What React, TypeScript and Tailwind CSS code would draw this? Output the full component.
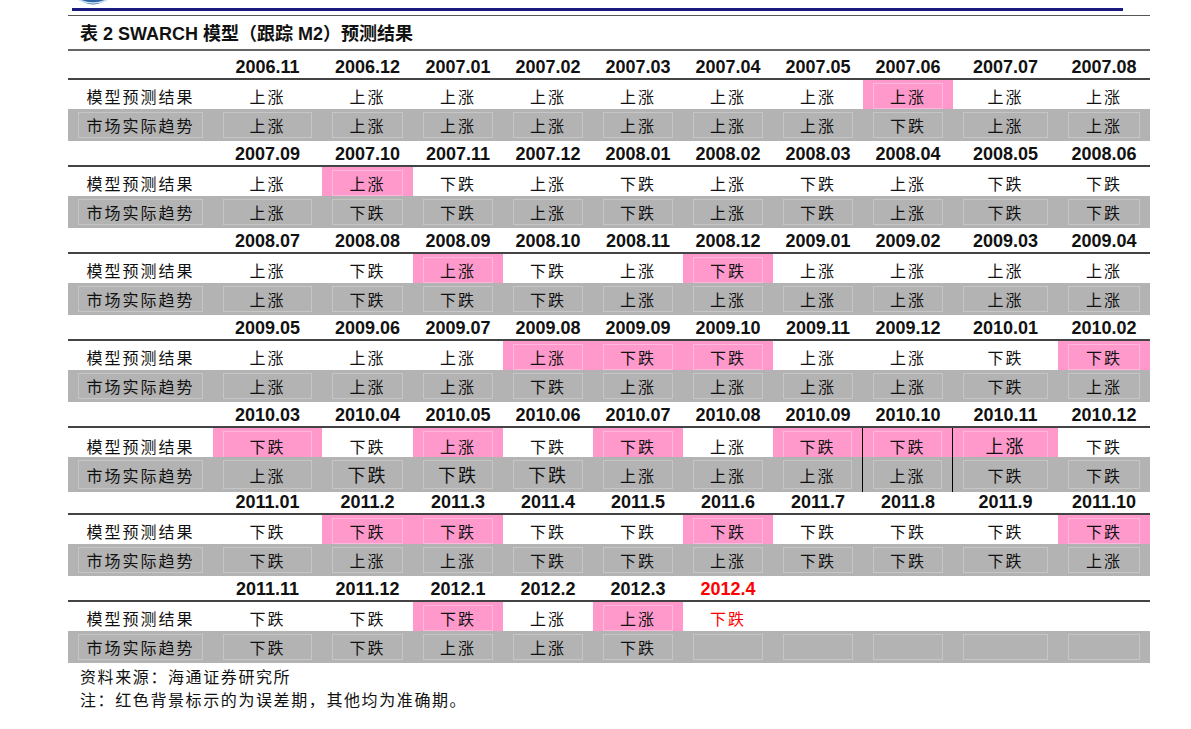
import React from 'react'

// U = 上涨, D = 下跌, - = empty
type Block = {
  dates: string[]
  pred: string
  act: string
  pinks: number[]
  lines?: boolean
  split?: boolean
  midLine?: boolean
  bigPred?: number[]
  bigAct?: number[]
}

const blocks: Block[] = [
  {
    dates: ['2006.11', '2006.12', '2007.01', '2007.02', '2007.03', '2007.04', '2007.05', '2007.06', '2007.07', '2007.08'],
    pred: 'UUUUUUUUUU',
    act: 'UUUUUUUDUU',
    pinks: [7],
  },
  {
    dates: ['2007.09', '2007.10', '2007.11', '2007.12', '2008.01', '2008.02', '2008.03', '2008.04', '2008.05', '2008.06'],
    pred: 'UUDUDUDUDD',
    act: 'UDDUDUDUDD',
    pinks: [1],
  },
  {
    dates: ['2008.07', '2008.08', '2008.09', '2008.10', '2008.11', '2008.12', '2009.01', '2009.02', '2009.03', '2009.04'],
    pred: 'UDUDUDUUUU',
    act: 'UDDDUUUUUU',
    pinks: [2, 5],
  },
  {
    dates: ['2009.05', '2009.06', '2009.07', '2009.08', '2009.09', '2009.10', '2009.11', '2009.12', '2010.01', '2010.02'],
    pred: 'UUUUDDUUDD',
    act: 'UUUDUUUUDU',
    pinks: [3, 4, 5, 9],
    lines: true,
  },
  {
    dates: ['2010.03', '2010.04', '2010.05', '2010.06', '2010.07', '2010.08', '2010.09', '2010.10', '2010.11', '2010.12'],
    pred: 'DDUDDUDDUD',
    act: 'UDDDUUUUDD',
    pinks: [0, 2, 4, 6, 7, 8],
    lines: true,
    midLine: true,
    split: true,
    bigPred: [8],
    bigAct: [1, 2, 3],
  },
  {
    dates: ['2011.01', '2011.2', '2011.3', '2011.4', '2011.5', '2011.6', '2011.7', '2011.8', '2011.9', '2011.10'],
    pred: 'DDDDDDDDDD',
    act: 'DUUDDUDDDU',
    pinks: [1, 2, 5, 9],
    lines: true,
    midLine: true,
  },
  {
    dates: ['2011.11', '2011.12', '2012.1', '2012.2', '2012.3', '2012.4', '', '', '', ''],
    pred: 'DDDUUD----',
    act: 'DDUUD-----',
    pinks: [2, 4],
    lines: true,
    midLine: true,
  },
]

const word = (c: string) => (c === 'U' ? '上涨' : c === 'D' ? '下跌' : '')

const cjk = "font-['Noto_Sans_CJK_SC',sans-serif]"
const grid =
  'grid grid-cols-[145px_109px_91px_90px_90px_90px_90px_90px_90px_105px_92px]'

function Cell({
  text,
  tone,
  red,
  split,
  big,
}: {
  text: string
  tone: 'white' | 'gray' | 'pink'
  red?: boolean
  split?: boolean
  big?: boolean
}) {
  const bg =
    tone === 'pink' ? 'bg-[#ff99cc]' : tone === 'gray' ? 'bg-[#b3b3b3]' : 'bg-white'
  const box =
    tone === 'pink'
      ? 'border-[#ffb8dc]'
      : tone === 'gray'
        ? 'border-[#c6c6c6]'
        : 'border-white'
  return (
    <div className={`h-full px-[10px] py-[3px] ${bg} ${split ? 'border-r border-black' : ''}`}>
      <div
        className={`flex h-full items-center justify-center border ${box} ${
          big ? 'text-[18px]' : 'text-[16px]'
        } tracking-[2px] ${red ? 'text-[#ff0000]' : 'text-[#111]'}`}
      >
        {text}
      </div>
    </div>
  )
}

function BlockRows({ b, last }: { b: Block; last: boolean }) {
  return (
    <>
      <div className={`${grid} h-[29px] border-b-2 border-[#444] pt-[3px]`}>
        <div />
        {b.dates.map((d, i) => (
          <div
            key={i}
            className={`flex items-center justify-center font-['Liberation_Sans',sans-serif] text-[18px] font-bold ${
              last && i === 5 ? 'text-[#ff0000]' : 'text-[#111]'
            }`}
          >
            {d}
          </div>
        ))}
      </div>
      <div className={`${grid} h-[29px] ${cjk} ${b.midLine ? 'border-b-2 border-[#444]' : ''}`}>
        <Cell text="模型预测结果" tone="white" />
        {b.pred.split('').map((c, i) => (
          <Cell
            key={i}
            text={word(c)}
            tone={b.pinks.includes(i) ? 'pink' : 'white'}
            red={last && i === 5}
            split={b.split && (i === 6 || i === 7)}
            big={b.bigPred?.includes(i)}
          />
        ))}
      </div>
      <div className={`${grid} h-[29px] ${cjk} ${b.lines ? 'border-b-2 border-[#444]' : ''}`}>
        <Cell text="市场实际趋势" tone="gray" />
        {b.act.split('').map((c, i) => (
          <Cell
            key={i}
            text={word(c)}
            tone="gray"
            split={b.split && (i === 6 || i === 7)}
            big={b.bigAct?.includes(i)}
          />
        ))}
      </div>
    </>
  )
}

export default function App() {
  return (
    <div className="relative h-[729px] w-[1191px] overflow-hidden bg-white">
      <svg className="absolute left-[73px] top-0" width="40" height="5" viewBox="0 0 40 5">
        <ellipse cx="20" cy="-14" rx="19.5" ry="18.5" fill="#2d64a8" />
        <path d="M6 0 Q20 6 34 0" stroke="#cfe0f2" strokeWidth="1.6" fill="none" />
      </svg>

      <div className="pt-[8px]">
        <div className="ml-[72px] h-[3px] w-[1051px] bg-[#1b1a7e]" />
        <div className="ml-[68px] mt-[4px] h-px w-[1082px] bg-[#555]" />
      </div>

      <div className="ml-[68px] w-[1082px]">
        <div
          className={`flex h-[35px] items-center border-b-2 border-[#666] pl-[12px] pt-[3px] font-['Liberation_Sans','Noto_Sans_CJK_SC',sans-serif] text-[18px] font-bold text-[#111]`}
        >
          表 2 SWARCH 模型（跟踪 M2）预测结果
        </div>

        {blocks.map((b, i) => (
          <BlockRows key={i} b={b} last={i === blocks.length - 1} />
        ))}

        <div className={`${cjk} pl-[12px] pt-[5px] text-[16px] leading-[23px] tracking-[1.6px] text-[#111]`}>
          <div>资料来源：海通证券研究所</div>
          <div>注：红色背景标示的为误差期，其他均为准确期。</div>
        </div>
      </div>
    </div>
  )
}
